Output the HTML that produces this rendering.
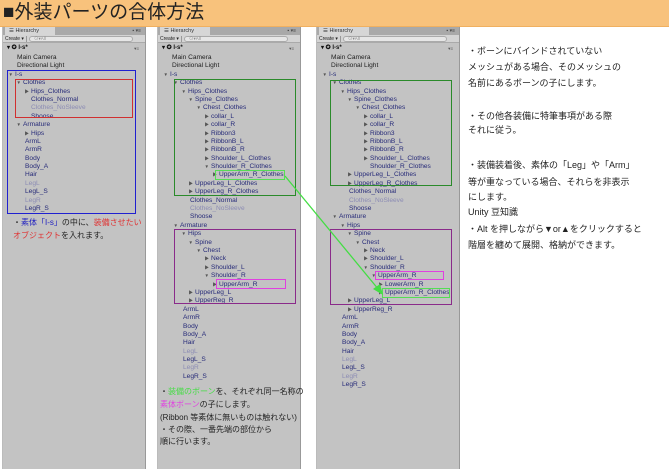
<!DOCTYPE html>
<html><head><meta charset="utf-8"><style>
*{margin:0;padding:0;box-sizing:border-box}
body{width:669px;height:469px;overflow:hidden;background:#fff;position:relative;font-family:"Liberation Sans","Noto Sans CJK JP",sans-serif}
.hdr{position:absolute;left:0;top:0;width:669px;height:27px;background:#f8c27c;border-bottom:1px solid #f0b060}
.hdr span{position:absolute;left:3px;top:2px;font-size:19px;color:#222;line-height:22px}
.pn{position:absolute;top:27px;width:144px;height:442px;background:#c3c3c3;border-right:1px solid #999;border-left:1px solid #bbb}
.tb{position:absolute;left:0;top:0;width:100%;height:8px;background:#a9a9a9}
.tab{position:absolute;left:2px;top:0;width:50px;height:8px;background:#d6d6d6;font-size:5.5px;line-height:8px;padding-left:4px;color:#333}
.tbi{position:absolute;right:4px;top:0;font-size:5px;line-height:8px;color:#444}
.tool{position:absolute;left:0;top:8px;width:100%;height:8px;background:#d4d4d4;border-bottom:1px solid #aaa}
.cr{position:absolute;left:2px;top:1px;font-size:5px;line-height:6px;color:#222;border-right:1px solid #999;padding-right:2px}
.sr{position:absolute;left:26px;top:1px;width:104px;height:6px;background:#e6e6e6;border:1px solid #aaa;border-radius:3px;font-size:4.5px;line-height:4px;color:#888;padding-left:4px}
.sc{position:absolute;left:0;top:17px;width:100%;height:9px;font-size:6px;line-height:9px;color:#111;padding-left:4px;font-weight:bold}
.sc b{position:absolute;right:6px;font-size:4.5px;color:#555;font-weight:normal}
.tree{position:absolute;left:0;top:27px;width:100%}
.r{position:relative;height:8.4px;line-height:8.4px;font-size:6.6px;color:#262a78;white-space:nowrap}
.r i{font-style:normal;position:absolute;font-size:4.5px;color:#555;margin-left:-6.5px}
.k{color:#1e1e1e}.d{color:#8c8cb4}
.bx{position:absolute;border:1.3px solid}
.nt{position:absolute;font-size:8px;line-height:13px;color:#222;white-space:nowrap}
.rt{position:absolute;left:468px;font-size:9px;color:#222;white-space:nowrap;line-height:11px}
</style></head><body>
<div class="hdr"><span>■外装パーツの合体方法</span></div>

<!-- Panel 1 -->
<div class="pn" style="left:2px">
<div class="tb"><div class="tab">☰ Hierarchy</div><div class="tbi">▪ ▾≡</div></div>
<div class="tool"><div class="cr">Create ▾</div><div class="sr">⊙▾All</div></div>
<div class="sc">▾ ✪ I-s*<b>▾≡</b></div>
<div class="tree">
<div class="r k" style="padding-left:14px">Main Camera</div>
<div class="r k" style="padding-left:14px">Directional Light</div>
<div class="r" style="padding-left:12px"><i>▼</i>I-s</div>
<div class="r" style="padding-left:20px"><i>▼</i>Clothes</div>
<div class="r" style="padding-left:28px"><i>▶</i>Hips_Clothes</div>
<div class="r" style="padding-left:28px">Clothes_Normal</div>
<div class="r d" style="padding-left:28px">Clothes_NoSleeve</div>
<div class="r" style="padding-left:28px">Shoose</div>
<div class="r" style="padding-left:20px"><i>▼</i>Armature</div>
<div class="r" style="padding-left:28px"><i>▶</i>Hips</div>
<div class="r" style="padding-left:22px">ArmL</div>
<div class="r" style="padding-left:22px">ArmR</div>
<div class="r" style="padding-left:22px">Body</div>
<div class="r" style="padding-left:22px">Body_A</div>
<div class="r" style="padding-left:22px">Hair</div>
<div class="r d" style="padding-left:22px">LegL</div>
<div class="r" style="padding-left:22px">LegL_S</div>
<div class="r d" style="padding-left:22px">LegR</div>
<div class="r" style="padding-left:22px">LegR_S</div>
</div>
</div>
<div class="bx" style="left:7px;top:70px;width:129px;height:144px;border-color:#2020d0"></div>
<div class="bx" style="left:15px;top:79px;width:118px;height:39px;border-color:#d03030"></div>
<div class="nt" style="left:13px;top:216px">・<span style="color:#2020c0">素体「I-s」</span>の中に、<span style="color:#e03030">装備させたい</span></div>
<div class="nt" style="left:13px;top:229px"><span style="color:#e03030">オブジェクト</span>を入れます。</div>

<!-- Panel 2 -->
<div class="pn" style="left:157px">
<div class="tb"><div class="tab">☰ Hierarchy</div><div class="tbi">▪ ▾≡</div></div>
<div class="tool"><div class="cr">Create ▾</div><div class="sr">⊙▾All</div></div>
<div class="sc">▾ ✪ I-s*<b>▾≡</b></div>
<div class="tree">
<div class="r k" style="padding-left:14px">Main Camera</div>
<div class="r k" style="padding-left:14px">Directional Light</div>
<div class="r" style="padding-left:12px"><i>▼</i>I-s</div>
<div class="r" style="padding-left:22px"><i>▼</i>Clothes</div>
<div class="r" style="padding-left:30px"><i>▼</i>Hips_Clothes</div>
<div class="r" style="padding-left:37px"><i>▼</i>Spine_Clothes</div>
<div class="r" style="padding-left:45px"><i>▼</i>Chest_Clothes</div>
<div class="r" style="padding-left:53px"><i>▶</i>collar_L</div>
<div class="r" style="padding-left:53px"><i>▶</i>collar_R</div>
<div class="r" style="padding-left:53px"><i>▶</i>Ribbon3</div>
<div class="r" style="padding-left:53px"><i>▶</i>RibbonB_L</div>
<div class="r" style="padding-left:53px"><i>▶</i>RibbonB_R</div>
<div class="r" style="padding-left:53px"><i>▶</i>Shoulder_L_Clothes</div>
<div class="r" style="padding-left:53px"><i>▼</i>Shoulder_R_Clothes</div>
<div class="r" style="padding-left:61px"><i>▶</i>UpperArm_R_Clothes</div>
<div class="r" style="padding-left:37px"><i>▶</i>UpperLeg_L_Clothes</div>
<div class="r" style="padding-left:37px"><i>▶</i>UpperLeg_R_Clothes</div>
<div class="r" style="padding-left:32px">Clothes_Normal</div>
<div class="r d" style="padding-left:32px">Clothes_NoSleeve</div>
<div class="r" style="padding-left:32px">Shoose</div>
<div class="r" style="padding-left:22px"><i>▼</i>Armature</div>
<div class="r" style="padding-left:30px"><i>▼</i>Hips</div>
<div class="r" style="padding-left:37px"><i>▼</i>Spine</div>
<div class="r" style="padding-left:45px"><i>▼</i>Chest</div>
<div class="r" style="padding-left:53px"><i>▶</i>Neck</div>
<div class="r" style="padding-left:53px"><i>▶</i>Shoulder_L</div>
<div class="r" style="padding-left:53px"><i>▼</i>Shoulder_R</div>
<div class="r" style="padding-left:61px"><i>▶</i>UpperArm_R</div>
<div class="r" style="padding-left:37px"><i>▶</i>UpperLeg_L</div>
<div class="r" style="padding-left:37px"><i>▶</i>UpperReg_R</div>
<div class="r" style="padding-left:25px">ArmL</div>
<div class="r" style="padding-left:25px">ArmR</div>
<div class="r" style="padding-left:25px">Body</div>
<div class="r" style="padding-left:25px">Body_A</div>
<div class="r" style="padding-left:25px">Hair</div>
<div class="r d" style="padding-left:25px">LegL</div>
<div class="r" style="padding-left:25px">LegL_S</div>
<div class="r d" style="padding-left:25px">LegR</div>
<div class="r" style="padding-left:25px">LegR_S</div>
</div>
</div>
<div class="bx" style="left:174px;top:79px;width:122px;height:117px;border-color:#2a8a2a"></div>
<div class="bx" style="left:215px;top:170px;width:70px;height:10px;border-color:#55dd55"></div>
<div class="bx" style="left:174px;top:229px;width:122px;height:75px;border-color:#8a2a8a"></div>
<div class="bx" style="left:216px;top:279px;width:70px;height:10px;border-color:#e040e0"></div>
<div class="nt" style="left:160px;top:385px">・<span style="color:#44dd44">装備のボーン</span>を、それぞれ同一名称の</div>
<div class="nt" style="left:160px;top:398px"><span style="color:#e040e0">素体ボーン</span>の子にします。</div>
<div class="nt" style="left:160px;top:411px">(Ribbon 等素体に無いものは触れない)</div>
<div class="nt" style="left:160px;top:423px">・その際、一番先端の部位から</div>
<div class="nt" style="left:160px;top:435px">順に行います。</div>

<!-- Panel 3 -->
<div class="pn" style="left:316px">
<div class="tb"><div class="tab">☰ Hierarchy</div><div class="tbi">▪ ▾≡</div></div>
<div class="tool"><div class="cr">Create ▾</div><div class="sr">⊙▾All</div></div>
<div class="sc">▾ ✪ I-s*<b>▾≡</b></div>
<div class="tree">
<div class="r k" style="padding-left:14px">Main Camera</div>
<div class="r k" style="padding-left:14px">Directional Light</div>
<div class="r" style="padding-left:12px"><i>▼</i>I-s</div>
<div class="r" style="padding-left:22px"><i>▼</i>Clothes</div>
<div class="r" style="padding-left:30px"><i>▼</i>Hips_Clothes</div>
<div class="r" style="padding-left:37px"><i>▼</i>Spine_Clothes</div>
<div class="r" style="padding-left:45px"><i>▼</i>Chest_Clothes</div>
<div class="r" style="padding-left:53px"><i>▶</i>collar_L</div>
<div class="r" style="padding-left:53px"><i>▶</i>collar_R</div>
<div class="r" style="padding-left:53px"><i>▶</i>Ribbon3</div>
<div class="r" style="padding-left:53px"><i>▶</i>RibbonB_L</div>
<div class="r" style="padding-left:53px"><i>▶</i>RibbonB_R</div>
<div class="r" style="padding-left:53px"><i>▶</i>Shoulder_L_Clothes</div>
<div class="r" style="padding-left:53px">Shoulder_R_Clothes</div>
<div class="r" style="padding-left:37px"><i>▶</i>UpperLeg_L_Clothes</div>
<div class="r" style="padding-left:37px"><i>▶</i>UpperLeg_R_Clothes</div>
<div class="r" style="padding-left:32px">Clothes_Normal</div>
<div class="r d" style="padding-left:32px">Clothes_NoSleeve</div>
<div class="r" style="padding-left:32px">Shoose</div>
<div class="r" style="padding-left:22px"><i>▼</i>Armature</div>
<div class="r" style="padding-left:30px"><i>▼</i>Hips</div>
<div class="r" style="padding-left:37px"><i>▼</i>Spine</div>
<div class="r" style="padding-left:45px"><i>▼</i>Chest</div>
<div class="r" style="padding-left:53px"><i>▶</i>Neck</div>
<div class="r" style="padding-left:53px"><i>▶</i>Shoulder_L</div>
<div class="r" style="padding-left:53px"><i>▼</i>Shoulder_R</div>
<div class="r" style="padding-left:61px"><i>▼</i>UpperArm_R</div>
<div class="r" style="padding-left:68px"><i>▶</i>LowerArm_R</div>
<div class="r" style="padding-left:68px"><i>▶</i>UpperArm_R_Clothes</div>
<div class="r" style="padding-left:37px"><i>▶</i>UpperLeg_L</div>
<div class="r" style="padding-left:37px"><i>▶</i>UpperReg_R</div>
<div class="r" style="padding-left:25px">ArmL</div>
<div class="r" style="padding-left:25px">ArmR</div>
<div class="r" style="padding-left:25px">Body</div>
<div class="r" style="padding-left:25px">Body_A</div>
<div class="r" style="padding-left:25px">Hair</div>
<div class="r d" style="padding-left:25px">LegL</div>
<div class="r" style="padding-left:25px">LegL_S</div>
<div class="r d" style="padding-left:25px">LegR</div>
<div class="r" style="padding-left:25px">LegR_S</div>
</div>
</div>
<div class="bx" style="left:330px;top:80px;width:122px;height:106px;border-color:#2a8a2a"></div>
<div class="bx" style="left:330px;top:229px;width:122px;height:76px;border-color:#8a2a8a"></div>
<div class="bx" style="left:375px;top:271px;width:69px;height:9px;border-color:#e040e0"></div>
<div class="bx" style="left:382px;top:288px;width:68px;height:10px;border-color:#55dd55"></div>

<svg style="position:absolute;left:0;top:0" width="669" height="469">
<line x1="285" y1="176" x2="379" y2="290" stroke="#44dd44" stroke-width="1.3"/>
<polygon points="383,295 373,289 380,284" fill="#44dd44"/>
</svg>

<div class="rt" style="top:46px">・ボーンにバインドされていない</div>
<div class="rt" style="top:62px">メッシュがある場合、そのメッシュの</div>
<div class="rt" style="top:78px">名前にあるボーンの子にします。</div>
<div class="rt" style="top:111px">・その他各装備に特筆事項がある際</div>
<div class="rt" style="top:125px">それに従う。</div>
<div class="rt" style="top:160px">・装備装着後、素体の「Leg」や「Arm」</div>
<div class="rt" style="top:177px">等が重なっている場合、それらを非表示</div>
<div class="rt" style="top:192px">にします。</div>
<div class="rt" style="top:207px">Unity 豆知識</div>
<div class="rt" style="top:224px">・Alt を押しながら▼or▲をクリックすると</div>
<div class="rt" style="top:240px">階層を纏めて展開、格納ができます。</div>
</body></html>
